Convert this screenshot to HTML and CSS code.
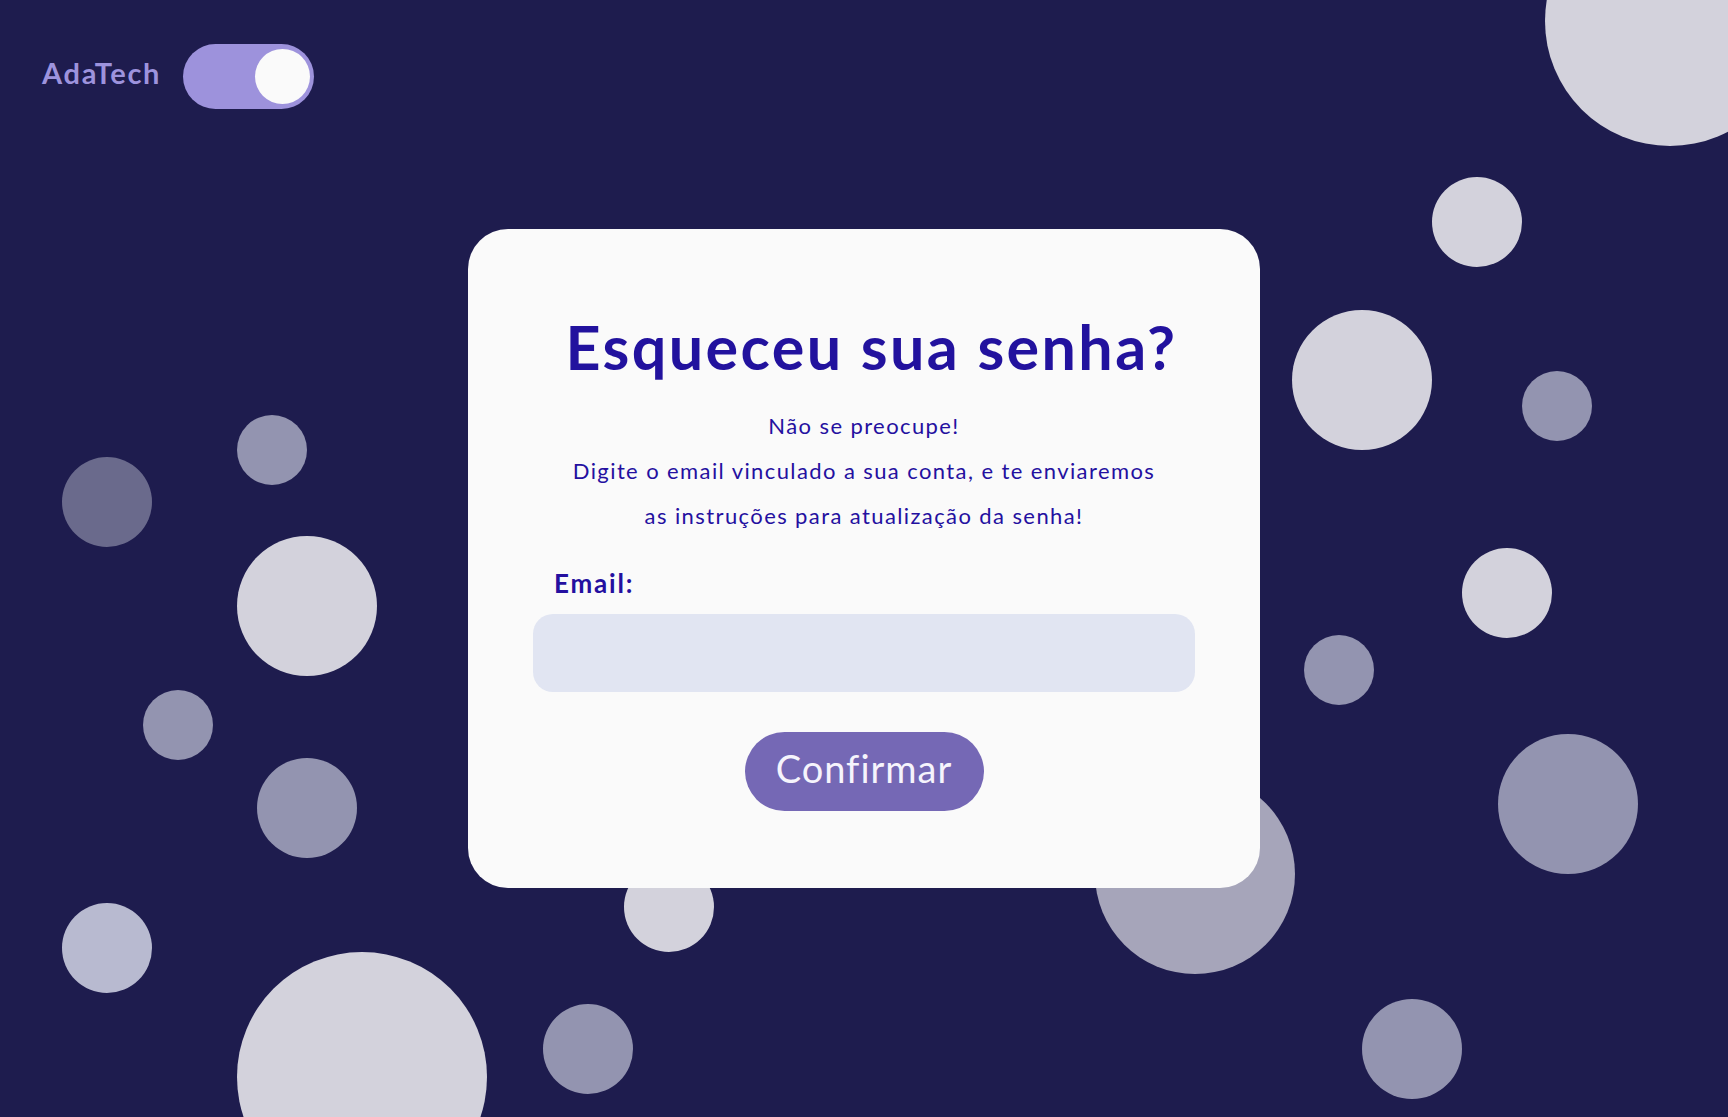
FILE: index.html
```html
<!DOCTYPE html>
<html lang="pt-BR">
<head>
<meta charset="utf-8">
<title>AdaTech - Esqueceu sua senha?</title>
<link rel="stylesheet" href="styles.css">
</head>
<body>
<div class="app">
  <div class="bubbles" aria-hidden="true">
    <span class="bubble b1"></span>
    <span class="bubble b2"></span>
    <span class="bubble b3"></span>
    <span class="bubble b4"></span>
    <span class="bubble b5"></span>
    <span class="bubble b6"></span>
    <span class="bubble b7"></span>
    <span class="bubble b8"></span>
    <span class="bubble b9"></span>
    <span class="bubble b10"></span>
    <span class="bubble b11"></span>
    <span class="bubble b12"></span>
    <span class="bubble b13"></span>
    <span class="bubble b14"></span>
    <span class="bubble b15"></span>
    <span class="bubble b16"></span>
    <span class="bubble b17"></span>
    <span class="bubble b18"></span>
  </div>
  <header class="header">
    <span class="brand">AdaTech</span>
    <button class="toggle" type="button" aria-label="Alternar tema"><span class="knob"></span></button>
  </header>
  <main class="main">
    <form class="card">
      <h1 class="title">Esqueceu sua senha?</h1>
      <p class="lead">Não se preocupe!<br>Digite o email vinculado a sua conta, e te enviaremos<br>as instruções para atualização da senha!</p>
      <label class="label" for="email">Email:</label>
      <input class="input" id="email" type="email">
      <button class="confirm" type="button">Confirmar</button>
    </form>
  </main>
</div>
</body>
</html>
```
FILE: styles.css
```css
* { box-sizing: border-box; }
html, body { margin: 0; padding: 0; }
body {
  background: #1e1c4e;
  font-family: Lato, "Noto Sans", sans-serif;
  font-variant-ligatures: none;
  overflow: hidden;
}
.app {
  position: relative;
  display: grid;
  min-height: 100vh;
}
.header, .main { grid-area: 1 / 1; position: relative; z-index: 1; }

.bubbles { position: absolute; inset: 0; overflow: hidden; z-index: 0; }
.bubble { position: absolute; border-radius: 50%; display: block; }
.b1  { left: 1545px; top: -104px; width: 250px; height: 250px; background: #d3d2dc; }
.b2  { left: 1432px; top: 177px; width: 90px; height: 90px; background: #d3d2dc; }
.b3  { left: 1292px; top: 310px; width: 140px; height: 140px; background: #d3d2dc; }
.b4  { left: 1522px; top: 371px; width: 70px; height: 70px; background: #9394b0; }
.b5  { left: 62px; top: 457px; width: 90px; height: 90px; background: #6a6a8c; }
.b6  { left: 237px; top: 415px; width: 70px; height: 70px; background: #9394b0; }
.b7  { left: 237px; top: 536px; width: 140px; height: 140px; background: #d3d2dc; }
.b8  { left: 143px; top: 690px; width: 70px; height: 70px; background: #9394b0; }
.b9  { left: 257px; top: 758px; width: 100px; height: 100px; background: #9394b0; }
.b10 { left: 62px; top: 903px; width: 90px; height: 90px; background: #b8bad0; }
.b11 { left: 237px; top: 952px; width: 250px; height: 250px; background: #d3d2dc; }
.b12 { left: 624px; top: 862px; width: 90px; height: 90px; background: #d3d2dc; }
.b13 { left: 543px; top: 1004px; width: 90px; height: 90px; background: #9394b0; }
.b14 { left: 1095px; top: 774px; width: 200px; height: 200px; background: #a6a5ba; }
.b15 { left: 1304px; top: 635px; width: 70px; height: 70px; background: #9394b0; }
.b16 { left: 1462px; top: 548px; width: 90px; height: 90px; background: #d3d2dc; }
.b17 { left: 1498px; top: 734px; width: 140px; height: 140px; background: #9394b0; }
.b18 { left: 1362px; top: 999px; width: 100px; height: 100px; background: #9394b0; }

.header {
  align-self: start;
  justify-self: start;
  display: flex;
  align-items: center;
  gap: 22px;
  padding: 44px 0 0 42px;
  z-index: 2;
}
.brand {
  color: #9d93dd;
  font-weight: 700;
  font-size: 29px;
  letter-spacing: 1.7px;
  line-height: 1;
  margin-top: -8px;
}
.toggle {
  width: 131px;
  height: 65px;
  border: 0;
  padding: 5px 4px;
  border-radius: 33px;
  background: #9d92dc;
  display: flex;
  justify-content: flex-end;
  align-items: flex-start;
  cursor: pointer;
}
.knob {
  width: 55px;
  height: 55px;
  border-radius: 50%;
  background: #fafafa;
  display: block;
}

.main {
  display: flex;
  align-items: center;
  justify-content: center;
}
.card {
  width: 792px;
  background: #fafafa;
  border-radius: 40px;
  padding: 87px 65px 77px;
  display: flex;
  flex-direction: column;
  align-items: stretch;
  color: #2410a0;
}
.title {
  margin: 0;
  padding-left: 15px;
  text-align: center;
  font-size: 61px;
  line-height: 61px;
  font-weight: 700;
  letter-spacing: 2.4px;
  color: #22129e;
}
.lead {
  margin: 26px 0 0;
  text-align: center;
  font-size: 22px;
  line-height: 45px;
  letter-spacing: 1.4px;
  color: #2410a0;
}
.label {
  margin: 30px 0 0 21px;
  font-size: 26px;
  line-height: 30px;
  font-weight: 700;
  letter-spacing: 1.8px;
  color: #2410a0;
}
.input {
  margin-top: 16.5px;
  height: 78px;
  border: 0;
  border-radius: 20px;
  background: #e1e5f2;
  font: inherit;
  font-size: 22px;
  padding: 0 20px;
  outline: none;
}
.confirm {
  align-self: center;
  margin-top: 40px;
  width: 239px;
  height: 79px;
  border: 0;
  border-radius: 40px;
  padding: 0 0 7px;
  background: #7568b5;
  color: #f6f4fc;
  font-family: Lato, "Noto Sans", sans-serif;
  font-variant-ligatures: none;
  font-size: 38px;
  letter-spacing: 1px;
  line-height: 1;
  cursor: pointer;
}
```
